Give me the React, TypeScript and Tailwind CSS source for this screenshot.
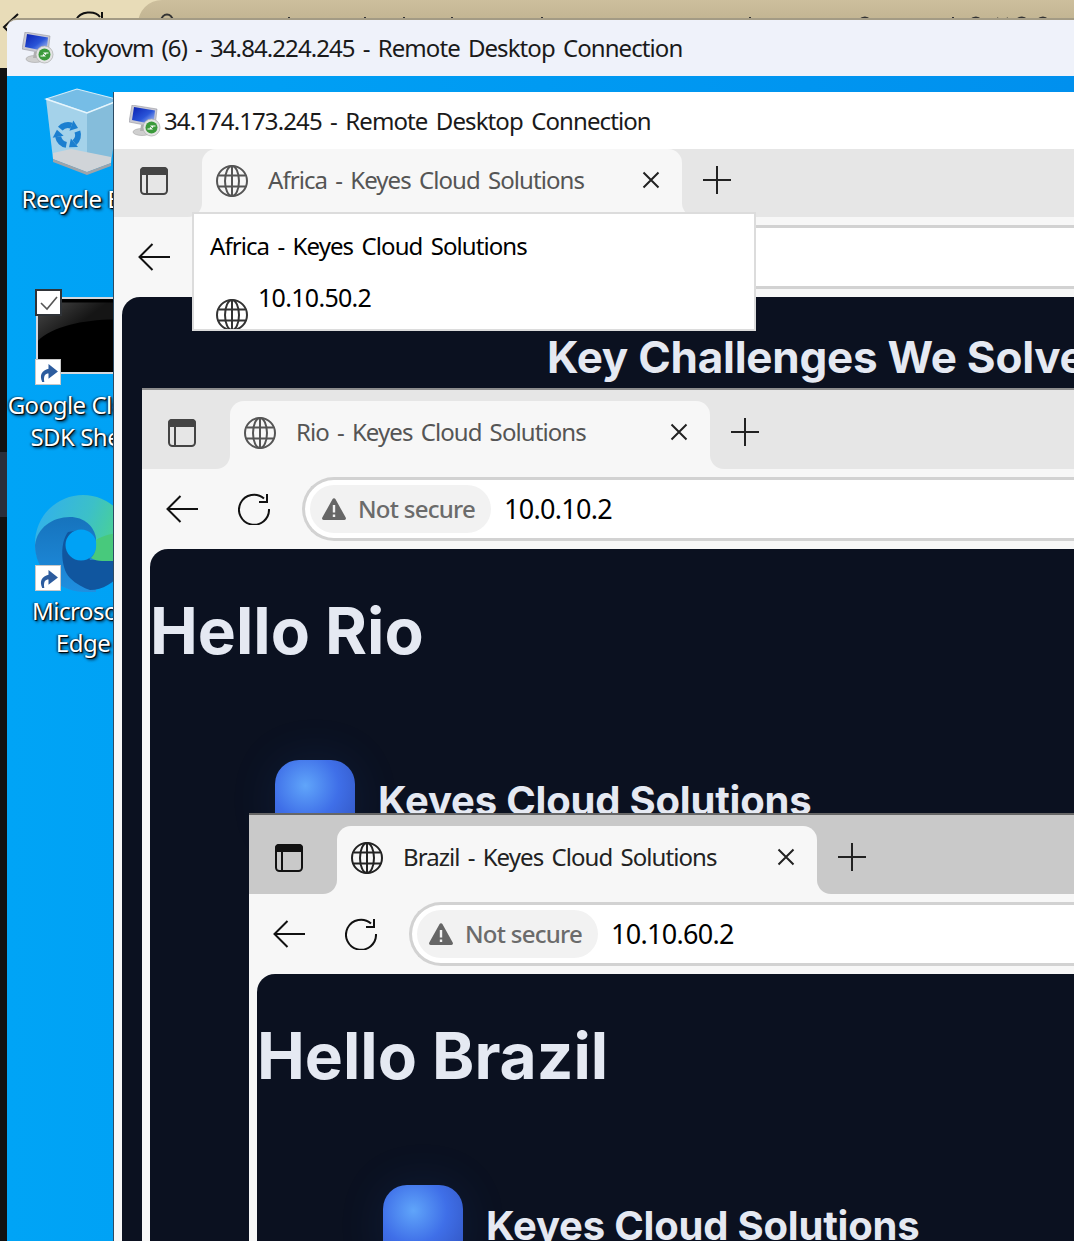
import React from "react";

const ui = "[font-family:'Noto_Sans',sans-serif]";

function GlobeIcon({ className = "" }: { className?: string }) {
  return (
    <svg viewBox="0 0 32 32" fill="none" stroke="currentColor" strokeWidth="2" className={className}>
      <circle cx="16" cy="16" r="15" />
      <ellipse cx="16" cy="16" rx="7" ry="15" />
      <path d="M16 1v30M2.5 10.5h27M2.5 21.5h27" />
    </svg>
  );
}

function SidebarIcon({ className = "" }: { className?: string }) {
  return (
    <svg viewBox="0 0 28 28" className={className}>
      <rect x="1" y="1" width="26" height="26" rx="3.5" fill="none" stroke="currentColor" strokeWidth="2" />
      <path d="M4 0h20a4 4 0 0 1 4 4v4H0V4a4 4 0 0 1 4-4z" fill="currentColor" />
      <path d="M7 8v19" stroke="currentColor" strokeWidth="2" />
    </svg>
  );
}

function BackIcon() {
  return (
    <svg viewBox="0 0 32 28" fill="none" stroke="#111" strokeWidth="2" className="w-8 h-7 shrink-0">
      <path d="M14.5 1 1.5 14l13 13M1.5 14H32" />
    </svg>
  );
}

function ReloadIcon() {
  return (
    <svg viewBox="0 0 32 32" fill="none" stroke="#111" strokeWidth="2" className="w-8 h-8 shrink-0">
      <path d="M26 5.5A15 15 0 1 0 31 16" />
      <path d="M29 1v8h-8" />
    </svg>
  );
}

function WarnIcon() {
  return (
    <svg viewBox="0 0 24 22" className="w-6 h-[22px] shrink-0">
      <path d="M10.6 1a1.6 1.6 0 0 1 2.8 0l10.3 18.6a1.6 1.6 0 0 1-1.4 2.4H1.7a1.6 1.6 0 0 1-1.4-2.4z" fill="#666" />
      <path d="M12 7v7.5M12 16.5v2.5" stroke="#f2f2f2" strokeWidth="2.4" />
    </svg>
  );
}

function CloseIcon() {
  return (
    <svg viewBox="0 0 18 18" fill="none" stroke="#222" strokeWidth="2" className="w-[18px] h-[18px] shrink-0">
      <path d="M1.5 1.5l15 15M16.5 1.5l-15 15" />
    </svg>
  );
}

function PlusIcon() {
  return (
    <svg viewBox="0 0 30 30" fill="none" stroke="#222" strokeWidth="2" className="w-[30px] h-[30px]">
      <path d="M15 1v28M1 15h28" />
    </svg>
  );
}

function RdpIcon({ className = "" }: { className?: string }) {
  return (
    <svg viewBox="0 0 32 32" className={className}>
      <defs>
        <linearGradient id="rdpscreen" x1="0" y1="0" x2="1" y2="1">
          <stop offset="0" stopColor="#0a1fb0" />
          <stop offset="0.55" stopColor="#2a55d8" />
          <stop offset="1" stopColor="#c8d8f8" />
        </linearGradient>
      </defs>
      <ellipse cx="13" cy="27" rx="9" ry="3.5" fill="#cfcfcf" stroke="#999" strokeWidth="0.5" />
      <path d="M12 20h4l1 6h-6z" fill="#b0b0b0" />
      <path d="M3 0 28 4 26 22 0 17z" fill="#c9c9d2" stroke="#8a8a92" strokeWidth="0.5" />
      <path d="M5 2 26 5.5 24.5 19.5 3 15z" fill="url(#rdpscreen)" />
      <circle cx="22.5" cy="22.5" r="8.5" fill="#e4e4e4" stroke="#aaa" strokeWidth="0.7" />
      <circle cx="22.5" cy="22.5" r="6" fill="#3b9a3b" />
      <path d="M18.5 24h4l-1.5-1.5M26.5 21h-4l1.5 1.5" stroke="#fff" strokeWidth="1.2" fill="none" />
    </svg>
  );
}

function ShortcutBadge({ className = "" }: { className?: string }) {
  return (
    <div className={`absolute w-[26px] h-[26px] bg-white border border-[#c8c8c8] flex items-center justify-center ${className}`}>
      <svg viewBox="0 0 20 20" className="w-[21px] h-[21px]">
        <path d="M4 19C1 12 4 8 10 6.5V2l9 7-9 7v-5c-3 0-5 2-4 8z" fill="#2c5c9e" />
      </svg>
    </div>
  );
}

function DesktopLabel({ lines, className }: { lines: string[]; className: string }) {
  return (
    <div
      className={`absolute w-[170px] text-center text-white text-[24px] leading-[32px] tracking-[-0.5px] whitespace-nowrap [text-shadow:1px_1px_1px_#000,-1px_0_2px_#0b2a44,2px_2px_3px_#0b2a44] ${className}`}
    >
      {lines.map((l) => (
        <div key={l}>{l}</div>
      ))}
    </div>
  );
}

function RecycleArrow({ angle }: { angle: number }) {
  return (
    <g transform={`rotate(${angle})`}>
      <path d="M-7.7 -6.4A10 10 0 0 1 3.4 -9.4" fill="none" stroke="#1b7fd0" strokeWidth="6" />
      <path d="M10 -7 5.3 -14.6 1.5 -4.2z" fill="#1b7fd0" />
    </g>
  );
}

function RecycleBin() {
  return (
    <svg viewBox="40 84 80 95" className="absolute left-[40px] top-[84px] w-[80px] h-[95px]">
      <path d="M46 99 77 89l43 11-33 13z" fill="#76bde6" stroke="#d4ecf8" strokeWidth="1.2" />
      <path d="M46 99l41 14-0 59-34-13z" fill="#a4d2ea" />
      <path d="M87 113l33-13-9 63-24 9z" fill="#85bddb" />
      <path d="M46 99l41 14 33-13" fill="none" stroke="#e6f5fc" strokeWidth="1.6" />
      <path d="M53 159l0-6 18-4 40 8 0 6-24 9z" fill="#d0d4d8" />
      <path d="M53 159l34 13 24-9v3l-24 9-34-13z" fill="#9ea4aa" />
      <g transform="translate(68 135)">
        <RecycleArrow angle={0} />
        <RecycleArrow angle={120} />
        <RecycleArrow angle={240} />
      </g>
    </svg>
  );
}

function CloudSdkIcon() {
  return (
    <>
      <div className="absolute left-[36px] top-[297px] w-[90px] h-[77px] border-2 border-[#d4d8de] bg-black overflow-hidden">
        <svg viewBox="0 0 90 73" className="w-full h-full">
          <defs>
            <linearGradient id="sdk" x1="0" y1="0" x2="1" y2="0.6">
              <stop offset="0" stopColor="#4a4a4a" />
              <stop offset="0.6" stopColor="#151515" />
            </linearGradient>
          </defs>
          <path d="M0 2h90v18C55 18 15 26 0 42z" fill="url(#sdk)" />
        </svg>
      </div>
      <div className="absolute left-[35px] top-[289px] w-[27px] h-[27px] bg-white border-2 border-[#2f3338] flex items-center justify-center">
        <svg viewBox="0 0 20 16" fill="none" stroke="#555" strokeWidth="1.6" className="w-5 h-4">
          <path d="M2 8l6 6L18 2" />
        </svg>
      </div>
      <ShortcutBadge className="left-[35px] top-[359px]" />
    </>
  );
}

function EdgeIcon() {
  return (
    <>
      <svg viewBox="30 490 92 106" className="absolute left-[30px] top-[490px] w-[92px] h-[106px]">
        <defs>
          <linearGradient id="edgetop" x1="0" y1="0" x2="1" y2="0.4">
            <stop offset="0" stopColor="#30aef2" />
            <stop offset="0.55" stopColor="#3cc0c8" />
            <stop offset="1" stopColor="#50d880" />
          </linearGradient>
          <linearGradient id="edgemid" x1="0" y1="0" x2="0" y2="1">
            <stop offset="0" stopColor="#1673bd" />
            <stop offset="1" stopColor="#1f8fe0" />
          </linearGradient>
        </defs>
        <circle cx="83" cy="543" r="48" fill="url(#edgetop)" />
        <path d="M35 545C37 528 52 517 70 517c14 0 24 9 26 21v54H83C55 590 35 570 35 545z" fill="url(#edgemid)" />
        <path d="M68 532c-8 10-8 36 2 46 6 6 14 10 20 12 14 0 26-8 34-22v-8H90L80 530z" fill="#10569f" />
        <circle cx="81" cy="545" r="15.5" fill="#00a2f5" />
        <path d="M91 558c5-5 6-12 5-18 8-5 18-7 28-7v28H102c-4 0-8-1-11-3z" fill="#48c97c" />
      </svg>
      <ShortcutBadge className="left-[35px] top-[565px]" />
    </>
  );
}

function Browser({
  pos,
  title,
  url,
  strip = "bg-[#e6e6e6]",
  tabText = "text-[#555]",
  iconText = "text-[#444]",
  topGap = true,
  topBorder = "",
  children,
}: {
  pos: string;
  title: string;
  url: string;
  strip?: string;
  tabText?: string;
  iconText?: string;
  topGap?: boolean;
  topBorder?: string;
  children: React.ReactNode;
}) {
  return (
    <div className={`flex flex-col bg-[#f7f7f7] ${pos} ${topBorder}`}>
      {topGap && <div className={`h-[11px] shrink-0 ${strip}`} />}
      <div className="flex h-[68px] shrink-0">
        <div className={`w-[88px] shrink-0 rounded-br-[14px] pl-[26px] pt-[18px] ${strip} ${iconText}`}>
          <SidebarIcon className="w-7 h-7" />
        </div>
        <div className={`w-[480px] shrink-0 ${strip}`}>
          <div className={`h-full bg-[#f7f7f7] rounded-t-[14px] flex items-center pl-[14px] pr-[22px] pb-[6px] ${tabText}`}>
            <GlobeIcon className="w-[32px] h-[32px] shrink-0 mt-[2px]" />
            <span className="ml-[20px] flex-1 text-[24px] tracking-[-0.92px] [word-spacing:2.8px] whitespace-nowrap">{title}</span>
            <CloseIcon />
          </div>
        </div>
        <div className={`flex-1 rounded-bl-[14px] pl-[20px] pt-[16px] ${strip}`}>
          <PlusIcon />
        </div>
      </div>
      <div className="flex h-[80px] shrink-0 items-center pl-[24px]">
        <BackIcon />
        <div className="ml-[40px]">
          <ReloadIcon />
        </div>
        <div className="ml-[32px] flex-1 h-[64px] border-[3px] border-r-0 border-[#d2d2d2] rounded-l-[32px] bg-white flex items-center pl-[5px]">
          <div className="h-[48px] w-[181px] rounded-full bg-[#f2f2f2] flex items-center pl-[12px]">
            <WarnIcon />
            <span className="ml-[12px] text-[24px] font-medium text-[#6b6b6b] tracking-[-0.75px] whitespace-nowrap">Not secure</span>
          </div>
          <span className="ml-[13px] text-[27px] text-black tracking-[-0.7px] whitespace-nowrap">{url}</span>
        </div>
      </div>
      <div className="flex-1 min-h-0 ml-[8px] bg-[#0b1120] rounded-tl-[18px] overflow-hidden [font-family:Inter,sans-serif] text-[#e5e9f2]">
        {children}
      </div>
    </div>
  );
}

function Hello({ name, row }: { name: string; row: string }) {
  return (
    <>
      <h1 className="pt-[45px] text-[64px] leading-[74px] font-bold whitespace-nowrap">Hello {name}</h1>
      <div className={`mt-[92px] flex gap-[23px] ${row}`}>
        <div className="w-[80px] h-[80px] shrink-0 rounded-[24px] bg-[radial-gradient(circle_at_38%_32%,#60a5fa_0%,#3f6fe8_45%,#2f4fb8_100%)] shadow-[0_0_50px_rgba(59,130,246,0.1)]" />
        <div className="pt-[17px] text-[40px] leading-[48px] font-bold tracking-[-0.2px] whitespace-nowrap">Keyes Cloud Solutions</div>
      </div>
    </>
  );
}

export default function App() {
  return (
    <div className={`relative w-[1074px] h-[1241px] overflow-hidden bg-[#111] ${ui}`}>
      {/* Host browser peeking above the outer remote session */}
      <div className="absolute inset-x-0 top-0 h-[68px] bg-[#e8dcb8]" />
      <div className="absolute left-[138px] top-0 right-0 h-[24px] rounded-tl-[24px] bg-gradient-to-b from-[#cdbf9d] to-[#c0b390]" />
      <svg viewBox="0 0 1074 34" className="absolute left-0 top-0 w-[1074px] h-[34px]" fill="none" stroke="#333" strokeWidth="2">
        <path d="M18 14 4 27l4 4" stroke="#111" />
        <path d="M76 20C80 11 95 10 100 17M102 12v7" stroke="#111" />
        <circle cx="167" cy="20" r="5.5" />
        <path d="M205 18v3M278 19v2M289 17v4M365 17v4M404 17v4M452 17v4M542 17v4M627 19v2M745 18v3M750 17v4M859 20c4-3 8-3 11 0M872 18v3M940 19v2M953 17v4M970 20c4-3 8-3 11 0M997 18l3 3M1008 18l-3 3M1016 20c4-3 8-3 11 0M1037 20c4-3 8-3 11 0" />
      </svg>
      <div className="absolute left-0 top-[452px] w-[7px] h-[65px] bg-[#2a2e3a]" />

      {/* Outer remote session */}
      <div className="absolute left-[7px] top-[18px] right-0 bottom-0 flex flex-col rounded-tl-[10px] overflow-hidden border-t-2 border-[#a39b85]">
        <div className="h-[56px] shrink-0 bg-[#eff2fa] flex items-center pl-[15px]">
          <RdpIcon className="w-[32px] h-[32px] shrink-0" />
          <span className="ml-[9px] text-[24px] tracking-[-0.92px] [word-spacing:2.8px] text-[#1a1a1a] whitespace-nowrap">
            tokyovm (6) - 34.84.224.245 - Remote Desktop Connection
          </span>
        </div>
        <div className="flex-1 bg-gradient-to-r from-[#00a4f6] to-[#0090ee]" />
      </div>

      {/* Desktop icons */}
      <RecycleBin />
      <DesktopLabel lines={["Recycle Bin"]} className="left-[-3px] top-[183px]" />
      <CloudSdkIcon />
      <DesktopLabel lines={["Google Cloud", "SDK Shell"]} className="left-[-4px] top-[389px]" />
      <EdgeIcon />
      <DesktopLabel lines={["Microsoft", "Edge"]} className="left-[-2px] top-[595px]" />

      {/* Nested session: Africa */}
      <div className="absolute left-[113px] top-[92px] right-0 bottom-0 border-l border-[#2c4a63] bg-white flex flex-col">
        <div className="h-[57px] shrink-0 flex items-center pl-[15px]">
          <RdpIcon className="w-[32px] h-[32px] shrink-0" />
          <span className="ml-[3px] text-[24px] tracking-[-0.9px] [word-spacing:3px] text-[#1a1a1a] whitespace-nowrap">
            34.174.173.245 - Remote Desktop Connection
          </span>
        </div>
        <Browser pos="flex-1 min-h-0" title="Africa - Keyes Cloud Solutions" url="10.10.50.2" topGap={false}>
          <div className="pt-[34px] pl-[425px] text-[44px] leading-[52px] font-bold tracking-[-0.25px] whitespace-nowrap">Key Challenges We Solve</div>
        </Browser>
      </div>

      {/* Tab hover card */}
      <div className="absolute left-[192px] top-[212px] w-[564px] h-[119px] bg-white border-2 border-[#dcdcdc] overflow-hidden text-black">
        <div className="pl-[16px] pt-[16px] text-[24px] leading-[32px] tracking-[-0.92px] [word-spacing:3px] whitespace-nowrap">Africa - Keyes Cloud Solutions</div>
        <div className="flex pl-[22px] pt-[18px]">
          <GlobeIcon className="w-[32px] h-[32px] shrink-0 mt-[19px] text-[#333]" />
          <span className="ml-[10px] text-[25px] leading-[34px] tracking-[-0.7px]">10.10.50.2</span>
        </div>
      </div>

      <Browser
        pos="absolute left-[142px] top-[388px] right-0 bottom-0"
        topBorder="border-t-2 border-[#8d8d8d]"
        title="Rio - Keyes Cloud Solutions"
        url="10.0.10.2"
      >
        <Hello name="Rio" row="ml-[125px]" />
      </Browser>

      <Browser
        pos="absolute left-[249px] top-[813px] right-0 bottom-0"
        topBorder="border-t-2 border-[#666]"
        strip="bg-[#c9c9c9]"
        tabText="text-[#222]"
        iconText="text-[#111]"
        title="Brazil - Keyes Cloud Solutions"
        url="10.10.60.2"
      >
        <Hello name="Brazil" row="ml-[126px]" />
      </Browser>
    </div>
  );
}
